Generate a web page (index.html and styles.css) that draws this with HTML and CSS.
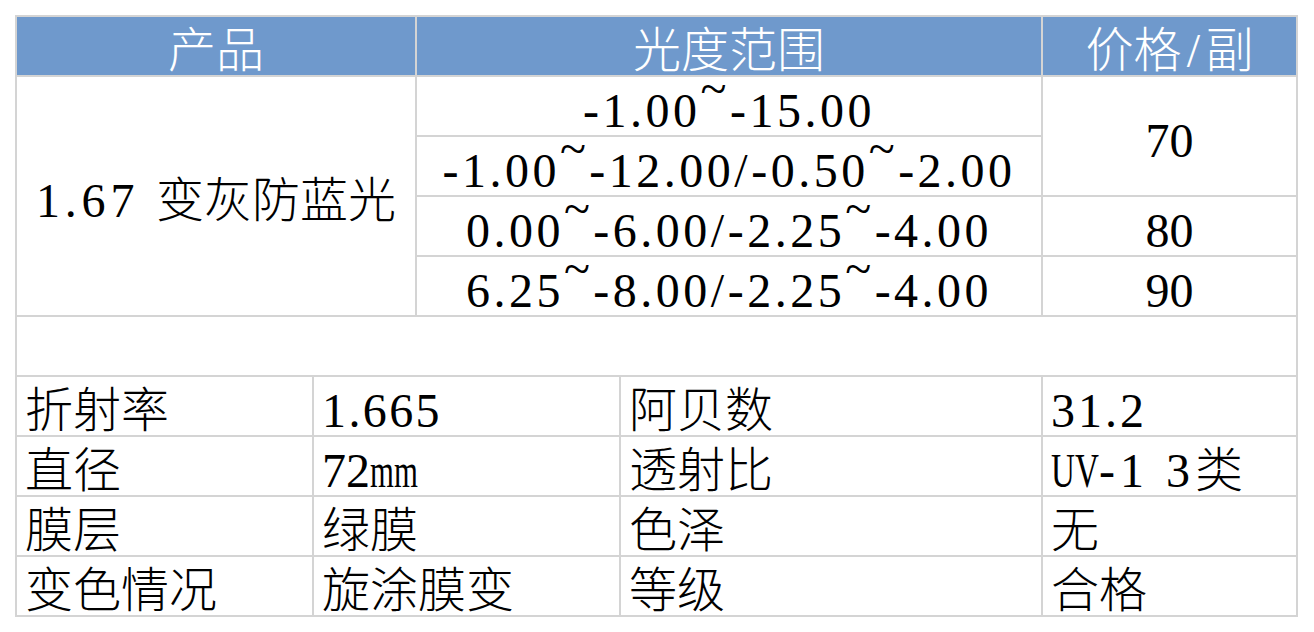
FILE: index.html
```html
<!DOCTYPE html>
<html lang="zh-CN">
<head>
<meta charset="utf-8">
<title>1.67 变灰防蓝光</title>
<link rel="stylesheet" href="styles.css">
</head>
<body>
<div class="sheet">
  <div class="cell hd c2">产品</div>
  <div class="cell hd c2">光度范围</div>
  <div class="cell hd">价格<span class="hw">/</span>副</div>

  <div class="cell c2 r4"><span class="w">1.67 </span>变灰防蓝光</div>
  <div class="cell c2"><span class="r">-1.00<span class="t">~</span>-15.00</span></div>
  <div class="cell r2">70</div>
  <div class="cell c2"><span class="r">-1.00<span class="t">~</span>-12.00/-0.50<span class="t">~</span>-2.00</span></div>
  <div class="cell c2"><span class="r">0.00<span class="t">~</span>-6.00/-2.25<span class="t">~</span>-4.00</span></div>
  <div class="cell">80</div>
  <div class="cell c2"><span class="r">6.25<span class="t">~</span>-8.00/-2.25<span class="t">~</span>-4.00</span></div>
  <div class="cell">90</div>

  <div class="cell c5"></div>

  <div class="cell l">折射率</div>
  <div class="cell l c2"><span class="n1">1.665</span></div>
  <div class="cell l">阿贝数</div>
  <div class="cell l"><span class="n2">31.2</span></div>

  <div class="cell l">直径</div>
  <div class="cell l c2">72<span class="mm">mm</span></div>
  <div class="cell l">透射比</div>
  <div class="cell l"><span class="uv">UV</span><span class="n3">-1 3</span>类</div>

  <div class="cell l">膜层</div>
  <div class="cell l c2">绿膜</div>
  <div class="cell l">色泽</div>
  <div class="cell l">无</div>

  <div class="cell l">变色情况</div>
  <div class="cell l c2">旋涂膜变</div>
  <div class="cell l">等级</div>
  <div class="cell l">合格</div>
</div>
</body>
</html>
```
FILE: styles.css
```css
body {
  margin: 0;
  background: #ffffff;
}

.sheet {
  display: grid;
  grid-template-columns: 295px 101px 202px 420px 253px;
  grid-auto-rows: 58px;
  gap: 2px;
  padding: 2px;
  width: max-content;
  margin: 15px 0 0 15px;
  background: #d4d4d4;
  font-family: "Liberation Serif", "Noto Sans CJK SC", serif;
  font-size: 48px;
  font-weight: 300;
  color: #000000;
}

.cell {
  box-sizing: border-box;
  background: #ffffff;
  text-align: center;
  line-height: 48px;
  padding-top: 10px;
  white-space: nowrap;
}

.hd {
  background: #6f99cc;
  color: #ffffff;
}

.c2 { grid-column: span 2; }
.c5 { grid-column: span 5; }
.r2 { grid-row: span 2; padding-top: 40px; }
.r4 { grid-row: span 4; padding-top: 100px; }

.l {
  text-align: left;
  padding-left: 8px;
}

.r { letter-spacing: 3.5px; }
.w { letter-spacing: 4.8px; }
.n1 { letter-spacing: 2.4px; }
.n2 { letter-spacing: 3px; }
.n3 { letter-spacing: 5px; }

.t {
  vertical-align: 0.45em;
  line-height: 0;
}

.hw {
  display: inline-block;
  width: 0.5em;
  text-align: center;
}

.mm {
  display: inline-block;
  transform: scaleX(0.64);
  transform-origin: left center;
}

.uv {
  display: inline-block;
  transform: scaleX(0.69);
  transform-origin: left center;
  margin-right: -0.444em;
}
```
